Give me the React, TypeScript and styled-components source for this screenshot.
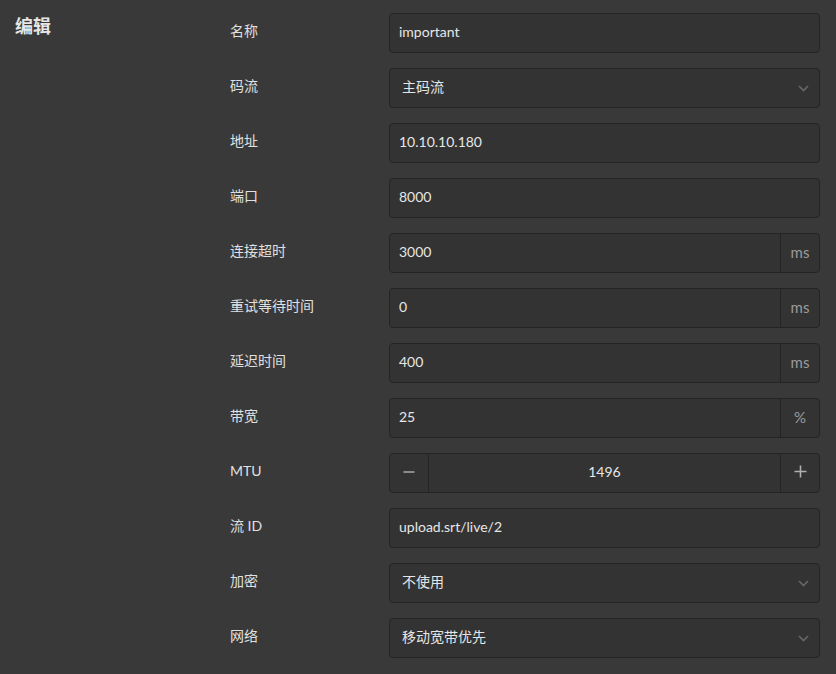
import React from "react";
import styled, { createGlobalStyle } from "styled-components";

const Global = createGlobalStyle`
  html, body { margin: 0; padding: 0; background: #393939; }
  body { font-family: Lato, "Noto Sans CJK SC", sans-serif; color: #e3e3e3; }
  * { box-sizing: border-box; }
`;

const Page = styled.div`
  display: grid;
  grid-template-columns: 230px 1fr;
  width: 836px;
  min-height: 674px;
  background: #393939;
  padding: 13px 16px 0 0;
`;

const Title = styled.h2`
  margin: 0;
  padding: 1px 0 0 15px;
  font-family: "Noto Sans CJK SC", sans-serif;
  font-size: 18px;
  font-weight: 700;
  line-height: 22px;
  color: #e6e6e6;
`;

const Form = styled.div`
  display: flex;
  flex-direction: column;
  gap: 15px;
`;

const Row = styled.div`
  display: grid;
  grid-template-columns: 159px 431px;
  align-items: center;
  height: 40px;
`;

const Label = styled.div`
  font-family: Lato, "Noto Sans CJK SC", sans-serif;
  font-size: 14px;
  line-height: 20px;
  color: #e0e0e0;
  padding-bottom: 4px;
`;

const Field = styled.div`
  display: flex;
  align-items: stretch;
  height: 40px;
  background: #333333;
  border: 1px solid #242424;
  border-radius: 4px;
  overflow: hidden;
  position: relative;
`;

const Value = styled.div<{ $center?: boolean; $pad?: number }>`
  flex: 1;
  display: flex;
  align-items: center;
  justify-content: ${(p) => (p.$center ? "center" : "flex-start")};
  padding-left: ${(p) => (p.$center ? 0 : p.$pad ?? 9)}px;
  font-size: 14px;
  line-height: 20px;
  color: #e6e6e6;
  padding-bottom: 3px;
`;

const Addon = styled.div<{ $side?: "left" | "right" }>`
  width: 39px;
  display: flex;
  align-items: center;
  justify-content: center;
  color: #9c9c9c;
  font-size: 15px;
  line-height: 20px;
  border-left: ${(p) => (p.$side === "left" ? "none" : "1px solid #242424")};
  border-right: ${(p) => (p.$side === "left" ? "1px solid #242424" : "none")};
  padding-bottom: 3px;
`;

const Chevron = styled.svg`
  position: absolute;
  right: 10px;
  top: 50%;
  margin-top: -3px;
  width: 11px;
  height: 7px;
`;

type RowDef =
  | { label: string; kind: "text"; value: string; suffix?: string }
  | { label: string; kind: "select"; value: string }
  | { label: string; kind: "stepper"; value: string };

const rows: RowDef[] = [
  { label: "名称", kind: "text", value: "important" },
  { label: "码流", kind: "select", value: "主码流" },
  { label: "地址", kind: "text", value: "10.10.10.180" },
  { label: "端口", kind: "text", value: "8000" },
  { label: "连接超时", kind: "text", value: "3000", suffix: "ms" },
  { label: "重试等待时间", kind: "text", value: "0", suffix: "ms" },
  { label: "延迟时间", kind: "text", value: "400", suffix: "ms" },
  { label: "带宽", kind: "text", value: "25", suffix: "%" },
  { label: "MTU", kind: "stepper", value: "1496" },
  { label: "流 ID", kind: "text", value: "upload.srt/live/2" },
  { label: "加密", kind: "select", value: "不使用" },
  { label: "网络", kind: "select", value: "移动宽带优先" },
];

const Minus = () => (
  <svg width="12" height="12" viewBox="0 0 12 12">
    <path d="M0.5 6H11.5" stroke="#a8a8a8" strokeWidth="1.6" />
  </svg>
);
const Plus = () => (
  <svg width="13" height="13" viewBox="0 0 13 13">
    <path d="M0.5 6.5H12.5M6.5 0.5V12.5" stroke="#b0b0b0" strokeWidth="1.6" />
  </svg>
);

function FieldFor({ r }: { r: RowDef }) {
  if (r.kind === "select") {
    return (
      <Field>
        <Value $pad={12}>{r.value}</Value>
        <Chevron viewBox="0 0 11 7">
          <path d="M1 1L5.5 5.5L10 1" fill="none" stroke="#666666" strokeWidth="1.7" />
        </Chevron>
      </Field>
    );
  }
  if (r.kind === "stepper") {
    return (
      <Field>
        <Addon $side="left"><Minus /></Addon>
        <Value $center>{r.value}</Value>
        <Addon><Plus /></Addon>
      </Field>
    );
  }
  return (
    <Field>
      <Value>{r.value}</Value>
      {r.suffix && <Addon>{r.suffix}</Addon>}
    </Field>
  );
}

export default function App() {
  return (
    <>
      <Global />
      <Page>
        <Title>编辑</Title>
        <Form>
          {rows.map((r) => (
            <Row key={r.label}>
              <Label>{r.label}</Label>
              <FieldFor r={r} />
            </Row>
          ))}
        </Form>
      </Page>
    </>
  );
}
